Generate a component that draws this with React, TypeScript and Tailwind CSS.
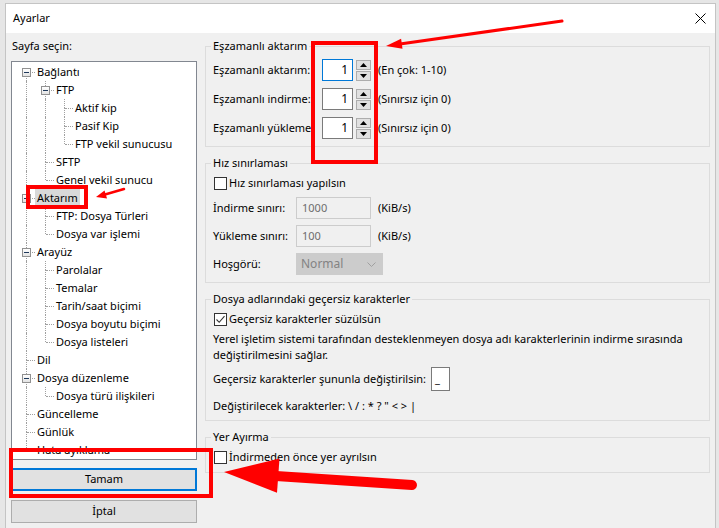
import React from 'react'

interface TreeItem {
  label: string
  depth: number
  kids?: boolean
  last?: boolean
  selected?: boolean
}

const tree: TreeItem[] = [
  { label: 'Bağlantı', depth: 0, kids: true },
  { label: 'FTP', depth: 1, kids: true },
  { label: 'Aktif kip', depth: 2 },
  { label: 'Pasif Kip', depth: 2 },
  { label: 'FTP vekil sunucusu', depth: 2, last: true },
  { label: 'SFTP', depth: 1 },
  { label: 'Genel vekil sunucu', depth: 1, last: true },
  { label: 'Aktarım', depth: 0, kids: true, selected: true },
  { label: 'FTP: Dosya Türleri', depth: 1 },
  { label: 'Dosya var işlemi', depth: 1, last: true },
  { label: 'Arayüz', depth: 0, kids: true },
  { label: 'Parolalar', depth: 1 },
  { label: 'Temalar', depth: 1 },
  { label: 'Tarih/saat biçimi', depth: 1 },
  { label: 'Dosya boyutu biçimi', depth: 1 },
  { label: 'Dosya listeleri', depth: 1, last: true },
  { label: 'Dil', depth: 0 },
  { label: 'Dosya düzenleme', depth: 0, kids: true },
  { label: 'Dosya türü ilişkileri', depth: 1, last: true },
  { label: 'Güncelleme', depth: 0 },
  { label: 'Günlük', depth: 0 },
  { label: 'Hata ayıklama', depth: 0, last: true },
]

function Tree() {
  const lastAt: boolean[] = []
  return (
    <div className="mt-[7px] h-[399px] overflow-hidden border border-[#828790] bg-white pt-[1px]">
      {tree.map((item, i) => {
        lastAt[item.depth] = !!item.last
        const cols = []
        for (let l = 0; l < item.depth; l++) {
          cols.push(
            <span key={l} className="relative h-full w-[19px] shrink-0">
              {!lastAt[l] && (
                <span className="absolute left-[10px] top-0 h-full border-l border-dotted border-[#a0a0a0]" />
              )}
            </span>
          )
        }
        return (
          <div key={item.label} className="flex h-[18px] items-center pl-[4px]">
            {cols}
            <span className="relative h-full w-[19px] shrink-0">
              {i > 0 && (
                <span className="absolute left-[10px] top-0 h-[9px] border-l border-dotted border-[#a0a0a0]" />
              )}
              {!item.last && (
                <span className="absolute left-[10px] top-[9px] h-[9px] border-l border-dotted border-[#a0a0a0]" />
              )}
              <span className="absolute left-[11px] top-[9px] w-[8px] border-t border-dotted border-[#a0a0a0]" />
              {item.kids && (
                <span className="absolute left-[6px] top-[5px] flex h-[9px] w-[9px] items-center justify-center border border-[#919191] bg-gradient-to-b from-white to-[#e3e3e3]">
                  <span className="h-px w-[5px] bg-[#1e395b]" />
                </span>
              )}
            </span>
            <span
              className={`whitespace-nowrap px-[2px] leading-[18px] ${item.selected ? 'bg-[#d9d9d9]' : ''}`}
            >
              {item.label}
            </span>
          </div>
        )
      })}
    </div>
  )
}

function Checkbox({ checked, label }: { checked?: boolean; label: string }) {
  return (
    <div className="flex h-[18px] items-center gap-[2px] pl-[1px]">
      <span className="flex h-[13px] w-[13px] shrink-0 items-center justify-center border border-[#333333] bg-white">
        {checked && (
          <svg width="11" height="11" viewBox="0 0 11 11">
            <path d="M1.5 5.5 L4.2 8.3 L9.5 2.2" fill="none" stroke="#333" strokeWidth="1.1" />
          </svg>
        )}
      </span>
      <span className="whitespace-nowrap">{label}</span>
    </div>
  )
}

function SpinButton({ up }: { up?: boolean }) {
  return (
    <span className="flex h-[10px] w-[15px] items-center justify-center border border-[#adadad] bg-[#e1e1e1]">
      <svg width="7" height="4" viewBox="0 0 7 4">
        {up ? <polygon points="0,4 7,4 3.5,0" fill="#000" /> : <polygon points="0,0 7,0 3.5,4" fill="#000" />}
      </svg>
    </span>
  )
}

function SpinRow({ label, note, focused }: { label: string; note: string; focused?: boolean }) {
  return (
    <div className="flex h-[22px] items-center">
      <span className="w-[109px] shrink-0 overflow-hidden whitespace-nowrap">{label}</span>
      <span
        className={`flex h-[22px] w-[31px] items-center justify-end border bg-white pr-[4px] text-[12px] ${focused ? 'border-[#0078d7]' : 'border-[#7a7a7a]'}`}
      >
        1
      </span>
      <span className="ml-[3px] flex flex-col gap-[1px]">
        <SpinButton up />
        <SpinButton />
      </span>
      <span className="ml-[7px] whitespace-nowrap">{note}</span>
    </div>
  )
}

function LimitRow({ label, value }: { label: string; value: string }) {
  return (
    <div className="flex h-[22px] items-center">
      <span className="w-[83px] shrink-0 whitespace-nowrap">{label}</span>
      <span className="flex h-[22px] w-[75px] items-center border border-[#cccccc] bg-[#f0f0f0] pl-[5px] text-[#6d6d6d]">
        {value}
      </span>
      <span className="ml-[7px]">(KiB/s)</span>
    </div>
  )
}

function Group({ title, children, className }: { title: string; children: React.ReactNode; className?: string }) {
  return (
    <fieldset className={`border border-[#dcdcdc] px-[7px] ${className ?? ''}`}>
      <legend className="-ml-[2px] px-[2px] leading-[16px]">{title}</legend>
      {children}
    </fieldset>
  )
}

export default function App() {
  return (
    <div className="relative h-[528px] w-[719px] overflow-hidden bg-[#e6e6e6] font-['Segoe_UI','Noto_Sans',sans-serif] text-[11px] text-black">
      <div className="ml-[5px] mt-[3px] flex h-[530px] w-[711px] flex-col border border-[#c4c4c4] bg-[#f0f0f0]">
        <div className="flex h-[29px] shrink-0 items-center justify-between bg-white pl-[7px] pr-[9px]">
          <span>Ayarlar</span>
          <svg width="11" height="11" viewBox="0 0 11 11">
            <path d="M0.5 0.5 L10.5 10.5 M10.5 0.5 L0.5 10.5" stroke="#000" strokeWidth="1" />
          </svg>
        </div>

        <div className="flex gap-[8px] px-[5px] pt-[5px]">
          {/* left: page tree and buttons */}
          <div className="flex w-[186px] shrink-0 flex-col">
            <div className="pl-[1px] leading-[16px]">Sayfa seçin:</div>
            <Tree />
            <button className="mt-[8px] flex h-[23px] items-center justify-center border-2 border-[#0078d7] bg-[#e1e1e1]">
              Tamam
            </button>
            <button className="mt-[9px] flex h-[23px] items-center justify-center border border-[#adadad] bg-[#e1e1e1]">
              İptal
            </button>
          </div>

          {/* right: transfer settings */}
          <div className="flex flex-1 flex-col gap-[8px]">
            <Group title="Eşzamanlı aktarım" className="pt-[5px] pb-[7px]">
              <div className="flex flex-col gap-[7px]">
                <SpinRow label="Eşzamanlı aktarım:" note="(En çok: 1-10)" focused />
                <SpinRow label="Eşzamanlı indirme:" note="(Sınırsız için 0)" />
                <SpinRow label="Eşzamanlı yükleme:" note="(Sınırsız için 0)" />
              </div>
            </Group>

            <Group title="Hız sınırlaması" className="pt-[3px] pb-[7px]">
              <Checkbox label="Hız sınırlaması yapılsın" />
              <div className="mt-[5px] flex flex-col gap-[6px]">
                <LimitRow label="İndirme sınırı:" value="1000" />
                <LimitRow label="Yükleme sınırı:" value="100" />
                <div className="flex h-[22px] items-center">
                  <span className="w-[83px] shrink-0">Hoşgörü:</span>
                  <span className="flex h-[22px] w-[87px] items-center justify-between border border-[#cccccc] bg-[#cccccc] pl-[4px] pr-[6px] text-[12px] text-[#838383]">
                    Normal
                    <svg width="9" height="5" viewBox="0 0 9 5">
                      <path d="M0.5 0.5 L4.5 4.5 L8.5 0.5" fill="none" stroke="#a0a0a0" strokeWidth="1" />
                    </svg>
                  </span>
                </div>
              </div>
            </Group>

            <Group title="Dosya adlarındaki geçersiz karakterler" className="pt-[3px] pb-[6px]">
              <Checkbox checked label="Geçersiz karakterler süzülsün" />
              <p className="mt-[3px] leading-[16px]">
                Yerel işletim sistemi tarafından desteklenmeyen dosya adı karakterlerinin indirme sırasında
                değiştirilmesini sağlar.
              </p>
              <div className="mt-[4px] flex h-[24px] items-center">
                <span className="whitespace-nowrap">Geçersiz karakterler şununla değiştirilsin:</span>
                <span className="ml-[5px] flex h-[24px] w-[19px] items-center border border-[#7a7a7a] bg-white pl-[3px]">
                  _
                </span>
              </div>
              <div className="mt-[7px] leading-[16px]">{'Değiştirilecek karakterler: \\ / : * ? " < > |'}</div>
            </Group>

            <Group title="Yer Ayırma" className="pt-[3px] pb-[6px]">
              <Checkbox label="İndirmeden önce yer ayrılsın" />
            </Group>
          </div>
        </div>
      </div>

      {/* red annotations drawn over the screenshot */}
      <svg className="pointer-events-none absolute left-0 top-0" width="719" height="528" viewBox="0 0 719 528">
        <g fill="none" stroke="#ff0000" strokeWidth="4">
          <rect x="313" y="43" width="63" height="119" />
          <rect x="11" y="450" width="200" height="46" />
          <rect x="28" y="187" width="58" height="20" />
        </g>
        <line x1="562" y1="21" x2="400" y2="44" stroke="#ff0000" strokeWidth="3" strokeLinecap="round" />
        <polygon points="386,46 402.5,48.8 401.1,38.7" fill="#ff0000" />
        <line x1="124" y1="189" x2="105" y2="194.5" stroke="#ff0000" strokeWidth="2.5" strokeLinecap="round" />
        <polygon points="96,197 107,198.5 104.5,190.4" fill="#ff0000" />
        <line x1="412" y1="485" x2="276" y2="476" stroke="#ff0000" strokeWidth="10" strokeLinecap="round" />
        <polygon points="224,472 279.5,458.5 277,492.7" fill="#ff0000" />
      </svg>
    </div>
  )
}
